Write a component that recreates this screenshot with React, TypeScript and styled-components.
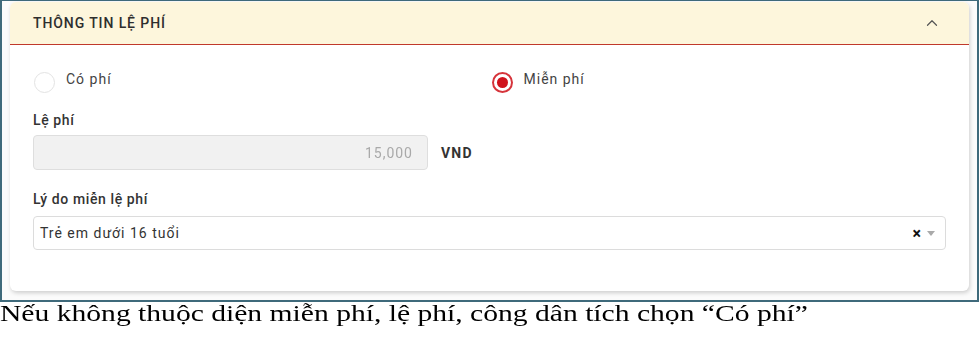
import React from "react";
import styled, { createGlobalStyle } from "styled-components";
import { ChevronUp } from "lucide-react";

const GlobalStyle = createGlobalStyle`
  html, body {
    margin: 0;
    padding: 0;
    background: #ffffff;
  }
  * { box-sizing: border-box; }
`;

export const Page = styled.div`
  width: 979px;
  min-height: 337px;
  overflow: hidden;
`;

export const Frame = styled.div`
  width: 979px;
  height: 302px;
  border: 2px solid #3f6a7b;
  border-top-width: 1.5px;
  padding: 1px 8px 8px 8px;
  background: #fbfbfb;
  font-family: Roboto, "Noto Sans", Arial, sans-serif;
`;

export const Card = styled.div`
  height: 289px;
  background: #ffffff;
  border-radius: 6px;
  box-shadow: 1px 2px 4px rgba(0, 0, 0, 0.18);
  overflow: hidden;
`;

export const Header = styled.div`
  height: 43px;
  background: #fdf6dc;
  border-bottom: 1.5px solid #c0392b;
  display: flex;
  align-items: center;
  justify-content: space-between;
  padding: 0 28px 0 23px;
  color: #2e2e2e;
  font-size: 14px;
  font-weight: 500;
  letter-spacing: 0.9px;
`;

export const Body = styled.div`
  padding: 25px 23px 0 23px;
  display: flex;
  flex-direction: column;
`;

export const RadioRow = styled.div`
  display: grid;
  grid-template-columns: 1fr 1fr;
  height: 24px;
`;

export const RadioOption = styled.label<{ $shift?: number }>`
  display: flex;
  align-items: flex-start;
  gap: 11px;
  font-size: 14px;
  line-height: 18px;
  letter-spacing: 1px;
  color: #444;
  margin-left: ${(p) => p.$shift ?? 0}px;
`;

export const RadioCircle = styled.span<{ $checked?: boolean }>`
  flex: none;
  width: 21px;
  height: 21px;
  margin-top: 2px;
  border-radius: 50%;
  border: ${(p) => (p.$checked ? "2px solid #d6343b" : "1.5px solid #e3e3e3")};
  display: flex;
  align-items: center;
  justify-content: center;
  &::after {
    content: "";
    width: 11px;
    height: 11px;
    border-radius: 50%;
    background: ${(p) => (p.$checked ? "#d0121c" : "transparent")};
  }
`;

export const FieldLabel = styled.div<{ $top: number }>`
  margin-top: ${(p) => p.$top}px;
  font-size: 14px;
  font-weight: 500;
  letter-spacing: 0.6px;
  color: #333;
  height: 18px;
  line-height: 18px;
`;

export const FeeRow = styled.div`
  display: flex;
  align-items: center;
  gap: 13px;
  margin-top: 6px;
`;

export const FeeInput = styled.div`
  width: 395px;
  height: 35px;
  background: #f1f1f1;
  border: 1px solid #dedede;
  border-radius: 4px;
  display: flex;
  align-items: center;
  justify-content: flex-end;
  padding-right: 14px;
`;

export const FeeValue = styled.span`
  font-size: 14px;
  letter-spacing: 1px;
  color: #a9a9a9;
  filter: blur(0.6px);
`;

export const Unit = styled.span`
  font-size: 14px;
  font-weight: 700;
  letter-spacing: 1.2px;
  color: #333;
`;

export const Select = styled.div`
  margin-top: 8px;
  height: 34px;
  border: 1px solid #dcdcdc;
  border-radius: 4px;
  display: flex;
  align-items: center;
  padding: 0 10px 0 6px;
  font-size: 14px;
  letter-spacing: 1px;
  color: #333;
`;

export const SelectText = styled.span`
  flex: 1;
`;

export const Clear = styled.span`
  font-size: 16px;
  font-weight: 700;
  color: #111;
  margin-right: 5px;
`;

export const Caret = styled.span`
  width: 0;
  height: 0;
  border-left: 4px solid transparent;
  border-right: 4px solid transparent;
  border-top: 5px solid #aaa;
`;

export const Caption = styled.p`
  margin: -1px 0 0 0;
  padding-bottom: 12px;
  width: max-content;
  font-family: "Liberation Serif", "Times New Roman", serif;
  font-size: 24px;
  line-height: 24px;
  color: #000;
  white-space: nowrap;
  transform: scaleX(1.233);
  transform-origin: left center;
`;

export default function App() {
  return (
    <Page>
      <GlobalStyle />
      <Frame>
        <Card>
          <Header>
            <span>THÔNG TIN LỆ PHÍ</span>
            <ChevronUp size={18} color="#555" strokeWidth={1.6} />
          </Header>
          <Body>
            <RadioRow>
              <RadioOption $shift={1}>
                <RadioCircle />
                <span>Có phí</span>
              </RadioOption>
              <RadioOption $shift={2}>
                <RadioCircle $checked />
                <span>Miễn phí</span>
              </RadioOption>
            </RadioRow>
            <FieldLabel $top={17}>Lệ phí</FieldLabel>
            <FeeRow>
              <FeeInput>
                <FeeValue>15,000</FeeValue>
              </FeeInput>
              <Unit>VND</Unit>
            </FeeRow>
            <FieldLabel $top={20}>Lý do miễn lệ phí</FieldLabel>
            <Select>
              <SelectText>Trẻ em dưới 16 tuổi</SelectText>
              <Clear>×</Clear>
              <Caret />
            </Select>
          </Body>
        </Card>
      </Frame>
      <Caption>Nếu không thuộc diện miễn phí, lệ phí, công dân tích chọn “Có phí”</Caption>
    </Page>
  );
}
